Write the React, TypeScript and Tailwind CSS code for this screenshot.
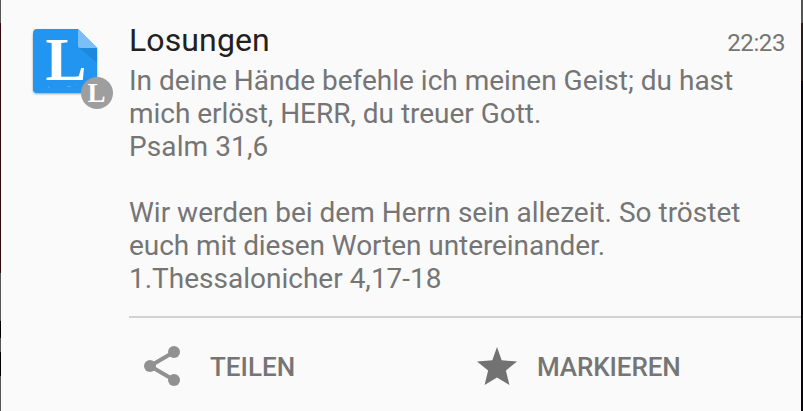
import React from "react";

function AppIcon() {
  return (
    <svg width="96" height="96" viewBox="24 20 96 96" className="block shrink-0">
      <defs>
        <filter id="soft" x="-10%" y="-10%" width="120%" height="125%">
          <feGaussianBlur stdDeviation="0.9" />
        </filter>
      </defs>
      <path d="M37 30.5H78L97 49V90a4 4 0 0 1-4 4H37a4 4 0 0 1-4-4V34z" fill="#000" opacity="0.35" filter="url(#soft)" />
      <path d="M37 29H78L97 48V89a4 4 0 0 1-4 4H37a4 4 0 0 1-4-4V33a4 4 0 0 1 4-4z" fill="#2295f1" />
      <path d="M79.500 48H97V63z" fill="#1e88de" />
      <path d="M78 29L97 48H80a2 2 0 0 1-2-2z" fill="#7bbef8" />
      <path d="M48 87h2M67 86.500h4M76 84.500h1" stroke="#5fb0f5" strokeWidth="0.8" />
      <text x="45.500" y="80" fontSize="61" fontWeight="700" fill="#fff" textLength="41" lengthAdjust="spacingAndGlyphs" className="font-['Liberation_Serif',serif]">L</text>
      <circle cx="97" cy="93" r="16" fill="#9e9e9e" />
      <text x="87.500" y="102" fontSize="27" fontWeight="700" fill="#fff" className="font-['Liberation_Serif',serif]">L</text>
    </svg>
  );
}

function ShareIcon() {
  return (
    <svg width="36" height="40" viewBox="0 0 36 40" fill="#919191" className="block shrink-0">
      <path d="M30 6L6 20L30 34" fill="none" stroke="#919191" strokeWidth="4" />
      <circle cx="30" cy="6" r="6" />
      <circle cx="6" cy="20" r="6" />
      <circle cx="30" cy="34" r="6" />
    </svg>
  );
}

function StarIcon() {
  return (
    <svg width="40" height="38" viewBox="0 0 40 38" fill="#727272" className="block shrink-0">
      <path d="M20 0L24.700 13.200L40 14.500L28.900 23.500L32.400 38L20 30.500L7.600 38L11.100 23.500L0 14.500L15.300 13.200z" />
    </svg>
  );
}

export default function App() {
  return (
    <div className="flex h-[411px] w-[803px] overflow-hidden bg-[#fafafa] font-['Roboto',sans-serif] text-[#757575]">
      <div className="flex w-px shrink-0 flex-col bg-[#555555]">
        <div className="mt-[23px] h-[250px] bg-[#300b09]" />
        <div className="mt-12 h-[17px] bg-black" />
        <div className="mt-[14px] h-6 bg-black" />
      </div>
      <main className="flex w-[800px] shrink-0">
        <div className="w-32 shrink-0 pl-[23px] pt-5">
          <AppIcon />
        </div>
        <div className="flex grow flex-col">
          <header className="flex h-16 items-baseline justify-between pr-4 pt-[21px]">
            <h1 className="text-[32px] leading-[38px] tracking-[0.12px] text-[#212121]">Losungen</h1>
            <time className="text-2xl leading-7 tracking-[-0.4px]">22:23</time>
          </header>
          <p className="h-[252px] whitespace-pre text-[28px] leading-[33px]">
            {"In deine Hände befehle ich meinen Geist; du hast\n"}
            <span className="tracking-[-0.03px]">{"mich erlöst, HERR, du treuer Gott.\n"}</span>
            <span className="tracking-[0.1px]">{"Psalm 31,6\n\n"}</span>
            {"Wir werden bei dem Herrn sein allezeit. So tröstet\n"}
            <span className="tracking-[-0.07px]">{"euch mit diesen Worten untereinander.\n"}</span>
            {"1.Thessalonicher 4,17-18"}
          </p>
          <div className="h-0.5 bg-[#d2d2d2]" />
          <div className="flex h-[93px] text-[26px] font-medium leading-8">
            <button className="flex h-24 w-[333px] items-center pl-[15px]">
              <ShareIcon />
              <span className="ml-[30px] pt-0.5">TEILEN</span>
            </button>
            <button className="flex h-24 items-center pl-[15px]">
              <StarIcon />
              <span className="ml-5 pt-0.5 tracking-[-0.1px]">MARKIEREN</span>
            </button>
          </div>
        </div>
      </main>
      <div className="flex w-0.5 shrink-0 flex-col bg-[#090416]">
        <div className="h-[23px] bg-[#555555]" />
        <div className="h-[58px] bg-[#2b191c]" />
      </div>
    </div>
  );
}
